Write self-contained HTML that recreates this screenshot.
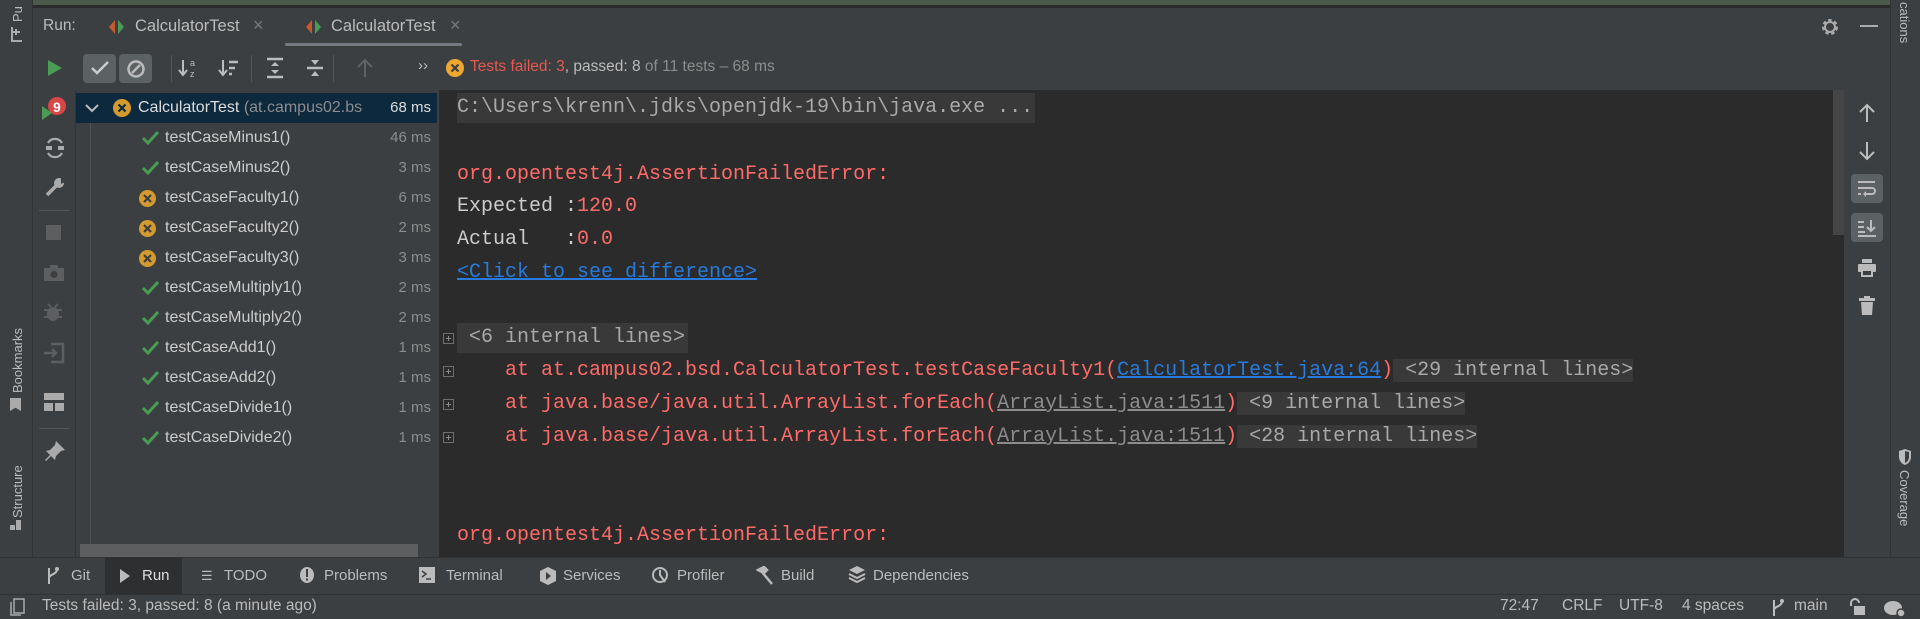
<!DOCTYPE html>
<html><head><meta charset="utf-8"><style>
*{margin:0;padding:0;box-sizing:border-box}
body{width:1920px;height:619px;background:#3c3f41;position:relative;overflow:hidden;font-family:"Liberation Sans",sans-serif;color:#bbbbbb;font-size:15px}
.a{position:absolute;white-space:nowrap}
.mono{font-family:"Liberation Mono",monospace;font-size:20px}
.red{color:#ff6b68}
.row{position:absolute;left:76px;width:361px;height:30px;line-height:30px}
.ms{position:absolute;right:6px;color:#8c8c8c}
.chk{position:absolute;left:65px;top:7px}
.fail{position:absolute;left:62px;top:6px}
.ln{position:absolute;left:457px;height:30px;line-height:30px;white-space:pre}
.hl{background:#393939;color:#a9a9a9}
.fold{position:absolute;left:443px;width:11px;height:11px;border:1px solid #6e6e6e}
.fold:after{content:"";position:absolute;left:2px;top:4px;width:5px;height:1px;background:#8a8a8a}
.fold:before{content:"";position:absolute;left:4px;top:2px;width:1px;height:5px;background:#8a8a8a}
.tab{position:absolute;top:558px;height:36px;line-height:36px;font-size:15px;color:#bbb}
.vt{position:absolute;transform-origin:left top;font-size:13px;color:#bbb}
</style></head><body>
<div class="a" style="left:33px;top:0;width:1857px;height:5px;background:#4b5a4a"></div>
<div class="a" style="left:33px;top:5px;width:1857px;height:3px;background:#2b2b2b"></div>
<div class="a" style="left:0;top:0;width:33px;height:558px;background:#3c3f41;border-right:1px solid #323232"></div>
<div class="vt" style="left:10px;top:22px;transform:rotate(-90deg)">Pu</div>
<svg class="a" style="left:10px;top:26px" width="14" height="16"><path d="M2 1v14h10M2 6h4M6 3v6M10 6l-4 0" stroke="#aaa" stroke-width="2" fill="none"/></svg>
<div class="vt" style="left:10px;top:393px;transform:rotate(-90deg)">Bookmarks</div>
<div class="a" style="left:10px;top:398px;width:11px;height:13px;background:#aaa;clip-path:polygon(0 0,100% 0,100% 100%,50% 75%,0 100%)"></div>
<div class="vt" style="left:10px;top:518px;transform:rotate(-90deg)">Structure</div>
<div class="a" style="left:10px;top:525px;width:5px;height:5px;background:#aaa"></div><div class="a" style="left:16px;top:520px;width:5px;height:10px;background:#aaa"></div>
<div class="a" style="left:1890px;top:0;width:30px;height:558px;background:#3c3f41;border-left:1px solid #323232"></div>
<div class="vt" style="top:2px;transform:rotate(90deg);left:1912px">cations</div>
<svg class="a" style="left:1897px;top:448px" width="16" height="18"><path d="M8 1L2 3v6c0 4 3 7 6 8 3-1 6-4 6-8V3z" fill="#bbb"/><path d="M8 3v12c2-1 4-3 4-6V4z" fill="#3c3f41"/></svg>
<div class="vt" style="left:1912px;top:470px;transform:rotate(90deg)">Coverage</div>
<div class="a" style="left:43px;top:17px;font-size:15.5px">Run:</div>
<svg class="a" style="left:108px;top:19px" width="18" height="16"><path d="M7 1L1 8l6 7z" fill="#c75a2c"/><path d="M10 1l6 7-6 7z" fill="#499c54"/></svg>
<div class="a" style="left:135px;top:17px;font-size:16.5px">CalculatorTest</div>
<div class="a" style="left:253px;top:15px;font-size:18px;color:#7a7a7a">×</div>
<svg class="a" style="left:305px;top:19px" width="18" height="16"><path d="M7 1L1 8l6 7z" fill="#c75a2c"/><path d="M10 1l6 7-6 7z" fill="#499c54"/></svg>
<div class="a" style="left:331px;top:17px;font-size:16.5px">CalculatorTest</div>
<div class="a" style="left:450px;top:15px;font-size:18px;color:#7a7a7a">×</div>
<div class="a" style="left:285px;top:43px;width:177px;height:3px;background:#747a80;border-radius:2px"></div>
<svg class="a" style="left:1820px;top:17px" width="20" height="20"><circle cx="10" cy="10" r="6" fill="none" stroke="#aaa" stroke-width="4" stroke-dasharray="3 2.3"/><circle cx="10" cy="10" r="5" fill="none" stroke="#aaa" stroke-width="2"/></svg>
<div class="a" style="left:1860px;top:25px;width:18px;height:2px;background:#aaa"></div>
<svg class="a" style="left:47px;top:59px" width="16" height="18"><path d="M1 1l14 8-14 8z" fill="#499c54"/></svg>
<div class="a" style="left:83px;top:54px;width:33px;height:29px;background:#5c6164;border-radius:4px"></div>
<svg class="a" style="left:90px;top:60px" width="20" height="16"><path d="M2 8l5 5 11-11" stroke="#ccc" stroke-width="2.5" fill="none"/></svg>
<div class="a" style="left:119px;top:54px;width:33px;height:29px;background:#5c6164;border-radius:4px"></div>
<svg class="a" style="left:126px;top:59px" width="20" height="20"><circle cx="10" cy="10" r="7.5" stroke="#bbb" stroke-width="2.5" fill="none"/><path d="M6 14l8-8" stroke="#bbb" stroke-width="2.5"/></svg>
<div class="a" style="left:171px;top:55px;width:1px;height:27px;background:#555"></div>
<svg class="a" style="left:178px;top:57px" width="22" height="22"><path d="M5 3v14M1 13l4 5 4-5" stroke="#bbb" stroke-width="2" fill="none"/><text x="12" y="9" font-size="9" fill="#bbb" font-family="Liberation Sans">a</text><text x="12" y="20" font-size="9" fill="#bbb" font-family="Liberation Sans">z</text></svg>
<svg class="a" style="left:218px;top:58px" width="22" height="20"><path d="M5 2v14M1 12l4 5 4-5" stroke="#bbb" stroke-width="2" fill="none"/><path d="M11 4h9M11 10h6M11 16h3" stroke="#bbb" stroke-width="2.5"/></svg>
<div class="a" style="left:251px;top:55px;width:1px;height:27px;background:#555"></div>
<svg class="a" style="left:265px;top:57px" width="20" height="22"><path d="M2 2h16M2 20h16" stroke="#bbb" stroke-width="2.5"/><path d="M10 5l-4 4h8zM10 17l-4-4h8z" fill="#bbb"/></svg>
<svg class="a" style="left:305px;top:57px" width="20" height="22"><path d="M2 11h16" stroke="#bbb" stroke-width="2.5"/><path d="M10 8l-4-5h8zM10 14l-4 5h8z" fill="#bbb"/></svg>
<div class="a" style="left:333px;top:55px;width:1px;height:27px;background:#555"></div>
<svg class="a" style="left:356px;top:58px" width="18" height="20"><path d="M9 19V3M2 9l7-7 7 7" stroke="#5f6264" stroke-width="2" fill="none"/></svg>
<div class="a" style="left:418px;top:57px;font-size:15px;color:#bbb">››</div>
<svg class="a" style="left:445px;top:58px" width="20" height="20"><circle cx="10" cy="10" r="9" fill="#f0a732"/><path d="M6.5 6.5l7 7M13.5 6.5l-7 7" stroke="#3c3f41" stroke-width="2.2"/></svg>
<div class="a" style="left:470px;top:58px;font-size:15.5px"><span style="color:#e5594f">Tests failed: 3</span>, passed: 8 <span style="color:#8c8c8c">of 11 tests – 68 ms</span></div>
<div class="a" style="left:75px;top:90px;width:1px;height:468px;background:#323232"></div>
<svg class="a" style="left:40px;top:96px" width="28" height="26"><path d="M2 10l10 7-10 7z" fill="#499c54"/><circle cx="17" cy="10" r="9" fill="#d84747"/><text x="13" y="16" font-size="14" font-weight="bold" fill="#fff" font-family="Liberation Sans">9</text></svg>
<svg class="a" style="left:44px;top:136px" width="22" height="24"><path d="M4 7a8 8 0 0 1 14 0M18 17a8 8 0 0 1-14 0" stroke="#aaa" stroke-width="2.2" fill="none"/><rect x="2" y="10" width="6" height="4" fill="#aaa"/><rect x="14" y="10" width="6" height="4" fill="#aaa"/></svg>
<svg class="a" style="left:44px;top:176px" width="22" height="22"><path d="M3 19l9-9" stroke="#aaa" stroke-width="3.5"/><circle cx="15" cy="7" r="5" fill="#aaa"/><path d="M17 2l4 4-4 2z" fill="#3c3f41"/></svg>
<div class="a" style="left:39px;top:210px;width:30px;height:1px;background:#555"></div>
<div class="a" style="left:46px;top:225px;width:15px;height:15px;background:#5c5e60"></div>
<svg class="a" style="left:43px;top:264px" width="22" height="18"><rect x="1" y="4" width="20" height="13" fill="#5c5e60"/><rect x="7" y="1" width="8" height="4" fill="#5c5e60"/><circle cx="11" cy="10.5" r="3.5" fill="#3c3f41"/></svg>
<svg class="a" style="left:43px;top:302px" width="22" height="22"><ellipse cx="10" cy="12" rx="6" ry="7" fill="#5c5e60"/><path d="M1 8h18M1 15h18M5 2l3 3M15 2l-3 3" stroke="#5c5e60" stroke-width="2"/></svg>
<svg class="a" style="left:43px;top:342px" width="22" height="22"><path d="M8 2h12v18H8M1 11h12M9 7l4 4-4 4" stroke="#5c5e60" stroke-width="2.5" fill="none"/></svg>
<svg class="a" style="left:43px;top:392px" width="22" height="20"><rect x="1" y="1" width="20" height="7" fill="#aaa"/><rect x="1" y="11" width="9" height="8" fill="#aaa"/><rect x="12" y="11" width="9" height="8" fill="#aaa"/></svg>
<div class="a" style="left:39px;top:428px;width:30px;height:1px;background:#555"></div>
<svg class="a" style="left:44px;top:440px" width="22" height="22"><path d="M12 1l9 9-4 1-5 5-1 4-4-4-5 5-1-1 5-5-4-4 4-1 5-5z" fill="#aaa"/></svg>
<div class="a" style="left:76px;top:90px;width:362px;height:468px;background:#3c3f41"></div>
<div class="row" style="top:93px;background:#0d293e">
 <svg class="a" style="left:9px;top:10px" width="14" height="10"><path d="M1 2l6 6 6-6" stroke="#bbb" stroke-width="2" fill="none"/></svg>
 <svg class="a" style="left:36px;top:5px" width="20" height="20"><circle cx="10" cy="10" r="9" fill="#d59a2e"/><path d="M6.5 6.5l7 7M13.5 6.5l-7 7" stroke="#0d293e" stroke-width="2.2"/></svg>
 <span class="a" style="left:62px;top:0;font-size:16px;color:#ddd">CalculatorTest <span style="color:#8c8c8c">(at.campus02.bs</span></span>
 <span class="ms" style="color:#ddd;background:#0d293e;padding-left:3px">68 ms</span>
</div>
<div class="a" style="left:90px;top:123px;width:1px;height:425px;background:#4e5254"></div>
<div class="a" style="left:80px;top:544px;width:338px;height:13px;background:#5c5e60"></div>
<div id="tree"></div>
<div class="a" style="left:439px;top:90px;width:1405px;height:468px;background:#2b2b2b"></div>
<div class="a" style="left:1833px;top:90px;width:11px;height:145px;background:#454545"></div>
<div class="a" style="left:1844px;top:90px;width:46px;height:468px;background:#3c3f41"></div>
<div class="ln mono hl" style="top:93px;color:#a9a9a9;padding-right:2px">C:\Users\krenn\.jdks\openjdk-19\bin\java.exe ...</div>
<div class="ln mono red" style="top:160px">org.opentest4j.AssertionFailedError:</div>
<div class="ln mono" style="top:192px;color:#ccc">Expected :<span class="red">120.0</span></div>
<div class="ln mono" style="top:225px;color:#ccc">Actual   :<span class="red">0.0</span></div>
<div class="ln mono" style="top:258px;color:#287bde;text-decoration:underline">&lt;Click to see difference&gt;</div>
<div class="fold" style="top:333px"></div>
<div class="ln mono hl" style="top:323px;padding:0 3px 0 0"> &lt;6 internal lines&gt;</div>
<div class="fold" style="top:366px"></div>
<div class="ln mono red" style="top:356px">    at at.campus02.bsd.CalculatorTest.testCaseFaculty1(<span style="color:#287bde;text-decoration:underline">CalculatorTest.java:64</span>)<span class="hl"> &lt;29 internal lines&gt;</span></div>
<div class="fold" style="top:399px"></div>
<div class="ln mono red" style="top:389px">    at java.base/java.util.ArrayList.forEach(<span style="color:#8c8c8c;text-decoration:underline">ArrayList.java:1511</span>)<span class="hl"> &lt;9 internal lines&gt;</span></div>
<div class="fold" style="top:432px"></div>
<div class="ln mono red" style="top:422px">    at java.base/java.util.ArrayList.forEach(<span style="color:#8c8c8c;text-decoration:underline">ArrayList.java:1511</span>)<span class="hl"> &lt;28 internal lines&gt;</span></div>
<div class="ln mono red" style="top:521px">org.opentest4j.AssertionFailedError:</div>
<svg class="a" style="left:1858px;top:103px" width="18" height="20"><path d="M9 19V3M2 9l7-7 7 7" stroke="#bbb" stroke-width="2" fill="none"/></svg>
<svg class="a" style="left:1858px;top:141px" width="18" height="20"><path d="M9 1v16M2 11l7 7 7-7" stroke="#bbb" stroke-width="2" fill="none"/></svg>
<div class="a" style="left:1851px;top:174px;width:32px;height:29px;background:#5c6164;border-radius:4px"></div>
<svg class="a" style="left:1857px;top:180px" width="20" height="18"><path d="M1 2h17M1 8h14a3 3 0 0 1 0 6H9M1 14h3" stroke="#bbb" stroke-width="2" fill="none"/><path d="M9 11l-3 3 3 3z" fill="#bbb"/></svg>
<div class="a" style="left:1851px;top:213px;width:32px;height:29px;background:#5c6164;border-radius:4px"></div>
<svg class="a" style="left:1857px;top:218px" width="20" height="20"><path d="M1 4h6M1 9h6M1 14h7M1 18h18M14 2v11M10 9l4 4 4-4" stroke="#bbb" stroke-width="2" fill="none"/></svg>
<svg class="a" style="left:1857px;top:258px" width="20" height="20"><rect x="5" y="1" width="10" height="4" fill="#bbb"/><rect x="1" y="6" width="18" height="8" rx="1" fill="#bbb"/><rect x="5" y="12" width="10" height="6" fill="#3c3f41" stroke="#bbb" stroke-width="2"/></svg>
<svg class="a" style="left:1858px;top:296px" width="18" height="20"><rect x="1" y="2" width="16" height="3" fill="#bbb"/><rect x="6" y="0" width="6" height="3" fill="#bbb"/><path d="M3 6h12l-1 13H4z" fill="#bbb"/></svg>
<div class="a" style="left:0;top:557px;width:1920px;height:1px;background:#323232"></div>
<div class="a" style="left:105px;top:558px;width:77px;height:36px;background:#2d2f30"></div>
<svg class="a" style="left:46px;top:566px" width="14" height="20"><path d="M3 2v16M3 12c0-4 8-3 8-9" stroke="#bbb" stroke-width="2" fill="none"/><circle cx="11" cy="3" r="2" fill="#bbb"/></svg>
<div class="tab" style="left:71px">Git</div>
<svg class="a" style="left:119px;top:568px" width="12" height="16"><path d="M1 1l10 7-10 7z" fill="#bbb"/></svg>
<div class="tab" style="left:142px;color:#ddd">Run</div>
<div class="tab" style="left:201px;font-size:13px">☰</div><div class="tab" style="left:224px">TODO</div>
<svg class="a" style="left:299px;top:566px" width="16" height="18"><ellipse cx="8" cy="9" rx="7" ry="8" fill="#bbb"/><rect x="7" y="3" width="2" height="8" fill="#3c3f41"/><rect x="7" y="12.5" width="2" height="2" fill="#3c3f41"/></svg>
<div class="tab" style="left:324px">Problems</div>
<svg class="a" style="left:419px;top:566px" width="16" height="18"><rect x="0" y="1" width="16" height="16" fill="#bbb"/><path d="M3 5l4 3-4 3" stroke="#3c3f41" stroke-width="1.5" fill="none"/><path d="M7 13h5" stroke="#3c3f41" stroke-width="1.5"/></svg>
<div class="tab" style="left:446px">Terminal</div>
<svg class="a" style="left:539px;top:566px" width="18" height="20"><path d="M9 1l8 4v10l-8 4-8-4V5z" fill="#bbb"/><path d="M7 6l5 4-5 4z" fill="#3c3f41"/></svg>
<div class="tab" style="left:563px">Services</div>
<svg class="a" style="left:651px;top:565px" width="20" height="22"><circle cx="9" cy="10" r="7" stroke="#bbb" stroke-width="2" fill="none"/><path d="M9 5v5l5 7" stroke="#bbb" stroke-width="2" fill="none"/></svg>
<div class="tab" style="left:677px">Profiler</div>
<svg class="a" style="left:756px;top:566px" width="18" height="20"><path d="M2 4l6-3 3 3-3 3z M6 6l10 12" stroke="#bbb" stroke-width="2.5" fill="#bbb"/></svg>
<div class="tab" style="left:781px">Build</div>
<svg class="a" style="left:848px;top:565px" width="18" height="20"><path d="M9 1l8 4-8 4-8-4z" fill="#bbb"/><path d="M1 9l8 4 8-4M1 13l8 4 8-4" stroke="#bbb" stroke-width="2" fill="none"/></svg>
<div class="tab" style="left:873px">Dependencies</div>
<div class="a" style="left:0;top:594px;width:1920px;height:1px;background:#323232"></div>
<svg class="a" style="left:10px;top:598px" width="16" height="18"><rect x="4" y="1" width="10" height="14" fill="none" stroke="#aaa" stroke-width="1.5"/><path d="M1 4v13h10" stroke="#aaa" stroke-width="1.5" fill="none"/></svg>
<div class="a" style="left:42px;top:597px;font-size:15.5px">Tests failed: 3, passed: 8 (a minute ago)</div>
<div class="a" style="left:1500px;top:597px;font-size:15.5px">72:47</div>
<div class="a" style="left:1562px;top:597px;font-size:15.5px">CRLF</div>
<div class="a" style="left:1619px;top:597px;font-size:15.5px">UTF-8</div>
<div class="a" style="left:1682px;top:597px;font-size:15.5px">4 spaces</div>
<svg class="a" style="left:1771px;top:598px" width="14" height="20"><path d="M3 2v16M3 12c0-4 8-3 8-9" stroke="#bbb" stroke-width="2" fill="none"/><circle cx="11" cy="3" r="2" fill="#bbb"/></svg>
<div class="a" style="left:1794px;top:597px;font-size:15.5px">main</div>
<svg class="a" style="left:1848px;top:598px" width="18" height="18"><path d="M3 8V5a4 4 0 0 1 8 0" stroke="#bbb" stroke-width="2" fill="none"/><rect x="6" y="8" width="11" height="9" fill="#bbb"/></svg>
<svg class="a" style="left:1883px;top:598px" width="24" height="20"><ellipse cx="10" cy="10" rx="9" ry="7" fill="#bbb"/><circle cx="18" cy="15" r="4" fill="#bbb" stroke="#3c3f41" stroke-width="1.5"/></svg>
<script>
var rows=[["testCaseMinus1()","46 ms",0],["testCaseMinus2()","3 ms",0],["testCaseFaculty1()","6 ms",1],["testCaseFaculty2()","2 ms",1],["testCaseFaculty3()","3 ms",1],["testCaseMultiply1()","2 ms",0],["testCaseMultiply2()","2 ms",0],["testCaseAdd1()","1 ms",0],["testCaseAdd2()","1 ms",0],["testCaseDivide1()","1 ms",0],["testCaseDivide2()","1 ms",0]];
var h="";rows.forEach(function(r,i){var t=123+i*30;
var ic=r[2]?'<svg class="fail" width="19" height="19"><circle cx="9.5" cy="9.5" r="8.5" fill="#d59a2e"/><path d="M6 6l7 7M13 6l-7 7" stroke="#3c3f41" stroke-width="2.2"/></svg>':'<svg class="chk" width="18" height="16"><path d="M2 8l5 5 10-11" stroke="#499c54" stroke-width="3" fill="none"/></svg>';
h+='<div class="row" style="top:'+t+'px">'+ic+'<span class="a" style="left:89px;top:0;font-size:16px;color:#ccc">'+r[0]+'</span><span class="ms">'+r[1]+'</span></div>';});
document.getElementById("tree").innerHTML=h;
</script>
</body></html>
